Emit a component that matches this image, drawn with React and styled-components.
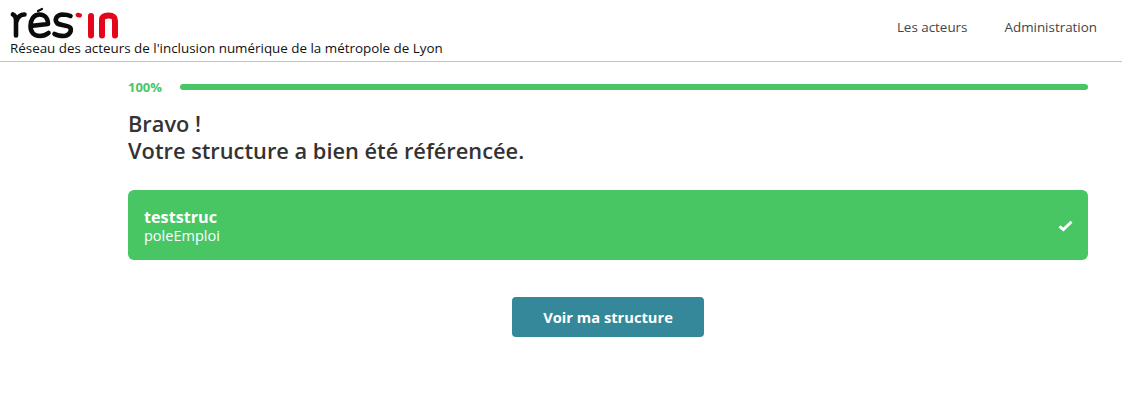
import React from "react";
import styled, { createGlobalStyle } from "styled-components";

const GlobalStyle = createGlobalStyle`
  body {
    margin: 0;
    background: #fff;
    font-family: "Open Sans", "Noto Sans", sans-serif;
    color: #333;
  }
`;

const Header = styled.header`
  display: flex;
  justify-content: space-between;
  align-items: center;
  height: 61px;
  padding: 0 25px 0 10px;
  border-bottom: 1px solid #c4c4c4;
`;

const Brand = styled.div`
  display: flex;
  flex-direction: column;
  align-items: flex-start;
`;

const Logo = styled.svg`
  display: block;
  width: 110px;
  height: 32px;
  margin-top: 3px;
`;

const Tagline = styled.span`
  font-size: 13.4px;
  line-height: 18px;
  color: #111;
  white-space: nowrap;
`;

const Nav = styled.nav`
  display: flex;
  gap: 37px;
  margin-top: -7px;
`;

const NavLink = styled.a`
  font-size: 13.4px;
  color: #444;
`;

const Main = styled.main`
  width: 960px;
  margin-left: 128px;
`;

const Progress = styled.div`
  display: flex;
  align-items: center;
  gap: 17px;
  padding-top: 17px;
  height: 16px;
`;

const Percent = styled.span`
  width: 35px;
  font-size: 13px;
  font-weight: 700;
  color: #48c664;
`;

const Bar = styled.div`
  flex: 1;
  height: 6px;
  border-radius: 3px;
  background: #48c664;
`;

const Title = styled.h1`
  margin: 15px 0 0;
  font-size: 21.8px;
  line-height: 27px;
  font-weight: 600;
  color: #333;
`;

const Card = styled.div`
  display: flex;
  justify-content: space-between;
  align-items: center;
  height: 70px;
  margin-top: 26px;
  padding: 1px 15px 0 16px;
  box-sizing: border-box;
  border-radius: 6px;
  background: #48c664;
  color: #fff;
`;

const CardText = styled.div`
  display: flex;
  flex-direction: column;
  padding-top: 2px;
`;

const CardName = styled.strong`
  font-size: 16.2px;
  line-height: 19px;
  font-weight: 700;
`;

const CardType = styled.span`
  font-size: 14.5px;
  line-height: 18px;
`;

const Actions = styled.div`
  display: flex;
  justify-content: center;
  margin-top: 37px;
`;

const Button = styled.button`
  width: 192px;
  height: 40px;
  border: none;
  border-radius: 4px;
  background: #348899;
  color: #fff;
  font-family: inherit;
  font-size: 14.7px;
  font-weight: 700;
`;

const App = () => {
  return (
    <>
      <GlobalStyle />
      <Header>
        <Brand>
          <Logo viewBox="0 0 110 32" fill="none" strokeLinecap="round" strokeLinejoin="round">
            <g stroke="#0b0b0b" strokeWidth="4.6">
              <path d="M3 7.5 C5 8.5 6 10.5 6 13 V28.5" />
              <path d="M6.5 14 C8 9.5 11 7.5 14.5 7.5" />
              <path d="M20.5 19 L38 17 C38 10.5 34 7.5 29.5 7.5 C23.5 7.5 20.5 13 20.5 19 C20.5 26 24.5 29 30 29 C33 29 36 28 38.5 26" />
              <path d="M28 4 L32 2" strokeWidth="2.2" />
              <path d="M60.5 9 C58 7.8 55 7.5 52 7.5 C46 8 44.5 13 47 16 C50 19 58 17.5 60.5 21 C62 25 58 29 54 29 C50 29 47 28.5 44.5 27" />
            </g>
            <g stroke="#e2071b" strokeWidth="6">
              <path d="M67.8 8 L69.8 8.4" strokeWidth="4.4" />
              <path d="M81 9 V28.5" />
              <path d="M92 28.5 V13 C92 9.5 95 8.5 98.5 8.5 C103 8.5 105 10 105 14 V28.5" />
            </g>
          </Logo>
          <Tagline>Réseau des acteurs de l'inclusion numérique de la métropole de Lyon</Tagline>
        </Brand>
        <Nav>
          <NavLink>Les acteurs</NavLink>
          <NavLink>Administration</NavLink>
        </Nav>
      </Header>
      <Main>
        <Progress>
          <Percent>100%</Percent>
          <Bar />
        </Progress>
        <Title>
          Bravo !
          <br />
          Votre structure a bien été référencée.
        </Title>
        <Card>
          <CardText>
            <CardName>teststruc</CardName>
            <CardType>poleEmploi</CardType>
          </CardText>
          <svg width="15" height="12" viewBox="0 0 15 12" fill="none">
            <path d="M1.5 6.3 L5.4 9.6 L13.5 1.8" stroke="#fff" strokeWidth="2.9" />
          </svg>
        </Card>
        <Actions>
          <Button>Voir ma structure</Button>
        </Actions>
      </Main>
    </>
  );
};

export default App;
